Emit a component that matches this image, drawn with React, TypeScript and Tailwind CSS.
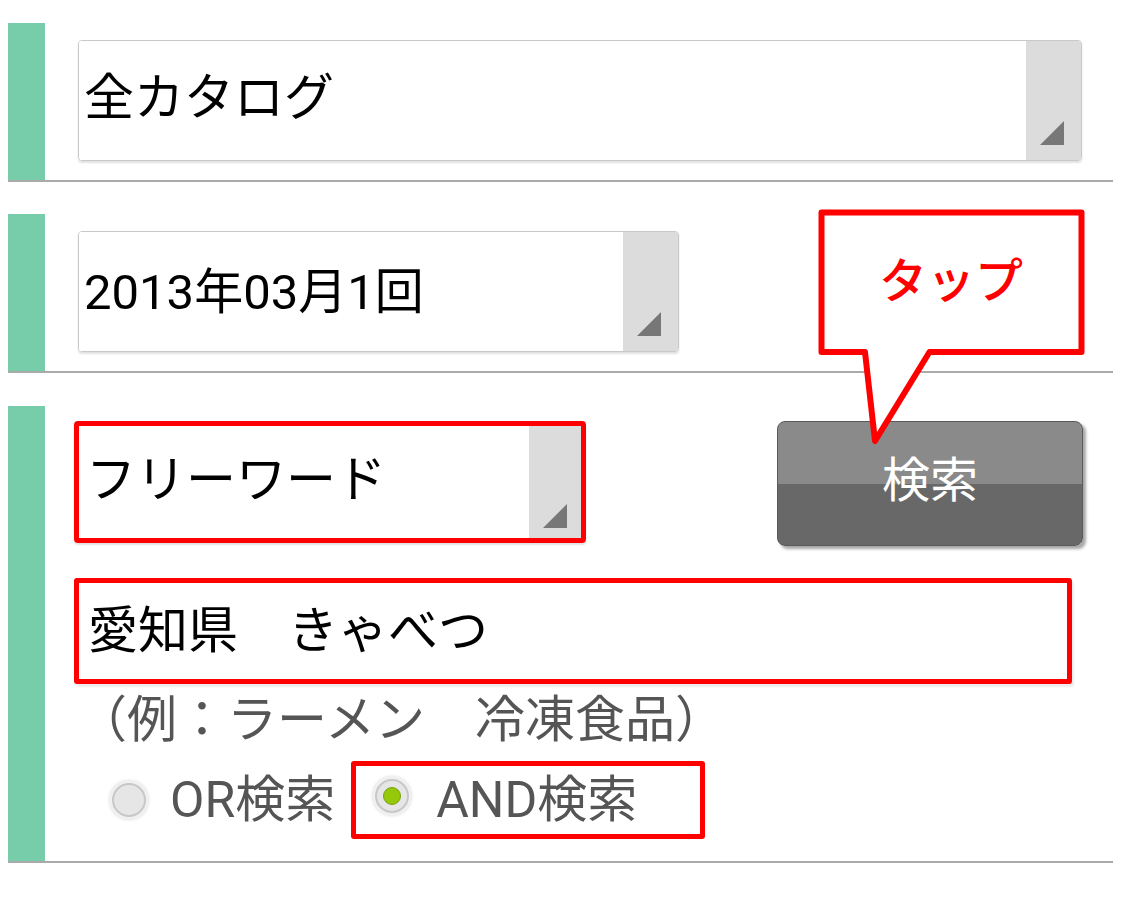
function Triangle() {
  return (
    <svg width="24" height="24" viewBox="0 0 24 24" className="absolute right-[17px] bottom-[15px]">
      <polygon points="24,0 24,24 0,24" fill="#777777" />
    </svg>
  );
}

function Radio({ checked }: { checked?: boolean }) {
  return (
    <div className="w-[40px] h-[40px] rounded-full bg-[#f0f0f0] flex items-center justify-center shadow-[0_0_3px_rgba(0,0,0,0.12)]">
      <div className="w-[34px] h-[34px] rounded-full bg-[#e6e6e6] border-2 border-[#c8c8c8] flex items-center justify-center">
        {checked && <div className="w-[18px] h-[18px] rounded-full bg-[#96c80a] border border-[#7aa010]" />}
      </div>
    </div>
  );
}

export default function App() {
  return (
    <div className="w-[1125px] h-[897px] bg-white relative overflow-hidden font-['Roboto','Noto_Sans_CJK_JP',sans-serif] text-black">
      {/* カタログ */}
      <div className="ml-[8px] w-[1105px] mt-[23px] flex border-b-2 border-[#aaaaaa]">
        <div className="w-[37px] bg-[#77cca9]" />
        <div className="pl-[33px] pt-[17px] pb-[19px]">
          <div className="w-[1004px] h-[121px] flex rounded-[4px] border border-[#c9c9c9] shadow-[0_2px_2px_rgba(0,0,0,0.12)] overflow-hidden">
            <div className="flex-1 bg-white flex items-center pl-[5px] text-[50px] leading-none pb-[6px]">全カタログ</div>
            <div className="w-[55px] bg-[#dcdcdc] relative">
              <Triangle />
            </div>
          </div>
        </div>
      </div>

      {/* 号 */}
      <div className="ml-[8px] w-[1105px] mt-[32px] flex border-b-2 border-[#aaaaaa]">
        <div className="w-[37px] bg-[#77cca9]" />
        <div className="pl-[33px] pt-[17px] pb-[19px]">
          <div className="w-[601px] h-[121px] flex rounded-[4px] border border-[#c9c9c9] shadow-[0_2px_2px_rgba(0,0,0,0.12)] overflow-hidden">
            <div className="flex-1 bg-white flex items-center pl-[5px] text-[49px] leading-none pt-[2px]">2013年03月1回</div>
            <div className="w-[55px] bg-[#dcdcdc] relative">
              <Triangle />
            </div>
          </div>
        </div>
      </div>

      {/* 検索条件 */}
      <div className="ml-[8px] w-[1105px] mt-[33px] flex border-b-2 border-[#aaaaaa]">
        <div className="w-[37px] bg-[#77cca9]" />
        <div className="flex-1 pl-[29px] pr-[30px] pt-[15px] pb-[22px] flex flex-col">
          <div className="flex justify-between items-start h-[125px]">
            <div className="w-[512px] h-[122px] flex rounded-[4px] border-[5px] border-[#ff0000] overflow-hidden shadow-[0_2px_2px_rgba(0,0,0,0.12)]">
              <div className="flex-1 bg-white flex items-center pl-[7px] text-[50px] leading-none pb-[4px]">フリーワード</div>
              <div className="w-[52px] bg-[#dcdcdc] relative">
                <svg width="24" height="24" viewBox="0 0 24 24" className="absolute right-[14px] bottom-[10px]">
                  <polygon points="24,0 24,24 0,24" fill="#777777" />
                </svg>
              </div>
            </div>
            <button className="w-[306px] h-[125px] rounded-[8px] border border-[#5a5a5a] bg-[linear-gradient(#8a8a8a_0%,#8a8a8a_50%,#686868_50%,#686868_100%)] shadow-[3px_3px_3px_rgba(0,0,0,0.35)] text-white text-[48px] leading-none pb-[6px] font-['Roboto','Noto_Sans_CJK_JP',sans-serif]">
              検索
            </button>
          </div>

          <div className="mt-[32px] w-[998px] h-[106px] rounded-[3px] border-[5px] border-[#ff0000] bg-white flex items-center pl-[9px] text-[50px] leading-none shadow-[2px_3px_2px_rgba(0,0,0,0.08)]">
            愛知県　きゃべつ
          </div>

          <div className="mt-[6px] pl-[3px] h-[60px] flex items-center text-[50px] leading-none text-[#555555]">
            （例：ラーメン　冷凍食品）
          </div>

          <div className="mt-[11px] flex items-center h-[78px]">
            <div className="ml-[35px] flex items-center gap-[21px]">
              <Radio />
              <span className="text-[50px] leading-none text-[#555555]">OR検索</span>
            </div>
            <div className="ml-[16px] w-[354px] h-[78px] rounded-[3px] border-[5px] border-[#ff0000] flex items-center pl-[16px] gap-[24px]">
              <div className="-mt-[8px]">
                <Radio checked />
              </div>
              <span className="text-[50px] leading-none text-[#555555]">AND検索</span>
            </div>
          </div>
        </div>
      </div>

      {/* 吹き出し */}
      <svg width="300" height="260" viewBox="0 0 300 260" className="absolute left-[810px] top-[200px]">
        <path
          d="M11.5 12.5 L271.5 12.5 L271.5 152 L119.5 152 L65 241 L55 152 L11.5 152 Z"
          fill="white"
          stroke="#ff0000"
          strokeWidth="6"
          strokeLinejoin="round"
        />
      </svg>
      <div className="absolute left-[822px] top-[213px] w-[258px] h-[138px] flex items-center justify-center text-[48px] leading-none text-[#ff0000] font-medium">
        タップ
      </div>
    </div>
  );
}
